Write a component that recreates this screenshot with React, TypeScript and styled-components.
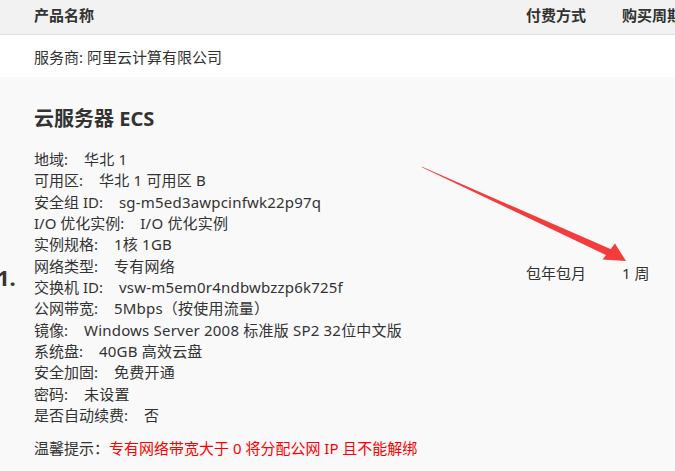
import React from "react";
import styled, { createGlobalStyle } from "styled-components";

const GlobalStyle = createGlobalStyle`
  html, body {
    margin: 0;
    padding: 0;
    background: #f9f9f9;
    overflow: hidden;
  }
  body {
    font-family: "Noto Sans", "Noto Sans CJK SC", sans-serif;
    color: #333;
  }
`;

const specs: [string, string][] = [
  ["地域:", "华北 1"],
  ["可用区:", "华北 1 可用区 B"],
  ["安全组 ID:", "sg-m5ed3awpcinfwk22p97q"],
  ["I/O 优化实例:", "I/O 优化实例"],
  ["实例规格:", "1核 1GB"],
  ["网络类型:", "专有网络"],
  ["交换机 ID:", "vsw-m5em0r4ndbwbzzp6k725f"],
  ["公网带宽:", "5Mbps（按使用流量）"],
  ["镜像:", "Windows Server 2008 标准版 SP2 32位中文版"],
  ["系统盘:", "40GB 高效云盘"],
  ["安全加固:", "免费开通"],
  ["密码:", "未设置"],
  ["是否自动续费:", "否"],
];

const App: React.FC = () => {
  return (
    <>
      <GlobalStyle />
      <Page>
        <HeaderRow>
          <span />
          <HeadCell>产品名称</HeadCell>
          <HeadCell>付费方式</HeadCell>
          <HeadCell>购买周期</HeadCell>
        </HeaderRow>

        <VendorRow>服务商: 阿里云计算有限公司</VendorRow>

        <ItemRow>
          <IndexCell>1.</IndexCell>
          <Detail>
            <Title>云服务器 ECS</Title>
            <SpecList>
              {specs.map(([label, value]) => (
                <SpecLine key={label}>
                  <SpecLabel>{label}</SpecLabel>
                  <SpecValue>{value}</SpecValue>
                </SpecLine>
              ))}
            </SpecList>
            <Notice>
              温馨提示：<NoticeRed>专有网络带宽大于 0 将分配公网 IP 且不能解绑</NoticeRed>
            </Notice>
          </Detail>
          <MidCell>包年包月</MidCell>
          <MidCell>1 周</MidCell>
        </ItemRow>

        <Arrow viewBox="0 0 675 471" width="675" height="471">
          <polygon
            points="421.5,166.6 422.3,167.4 608.8,256.4 611.6,249.6"
            fill="#f43c3c"
          />
          <polygon points="626,261 602.5,259.5 615,243.5" fill="#f43c3c" />
        </Arrow>
      </Page>
    </>
  );
};

export default App;

const Page = styled.div`
  position: relative;
  width: 760px;
  font-size: 15px;
`;

const cols = `34px 492px 96px 138px`;

const HeaderRow = styled.div`
  display: grid;
  grid-template-columns: ${cols};
  height: 35px;
  align-items: center;
  background: #f2f2f2;
  border-bottom: 1px solid #dedede;
  padding-bottom: 3px;
  box-sizing: border-box;
`;

const HeadCell = styled.div`
  font-weight: bold;
  line-height: 21px;
  white-space: nowrap;
`;

const VendorRow = styled.div`
  height: 42px;
  display: flex;
  align-items: center;
  padding-left: 34px;
  background: #fff;
`;

const ItemRow = styled.div`
  display: grid;
  grid-template-columns: ${cols};
  align-items: center;
  background: #f9f9f9;
`;

const IndexCell = styled.div`
  font-size: 22px;
  font-weight: bold;
  margin-left: -3px;
  padding-top: 8px;
`;

const Detail = styled.div`
  padding: 28px 0 10px;
`;

const Title = styled.div`
  font-size: 20px;
  font-weight: bold;
  line-height: 28px;
  margin-bottom: 16px;
`;

const SpecList = styled.div`
  display: flex;
  flex-direction: column;
`;

const SpecLine = styled.div`
  line-height: 21.33px;
  white-space: nowrap;
`;

const SpecLabel = styled.span`
  margin-right: 16px;
`;

const SpecValue = styled.span`
  letter-spacing: 0.2px;
`;

const Notice = styled.div`
  margin-top: 12px;
  line-height: 21.33px;
  white-space: nowrap;
`;

const NoticeRed = styled.span`
  color: #ff0000;
`;

const MidCell = styled.div`
  line-height: 21px;
  white-space: nowrap;
`;

const Arrow = styled.svg`
  position: absolute;
  left: 0;
  top: 0;
  pointer-events: none;
`;
